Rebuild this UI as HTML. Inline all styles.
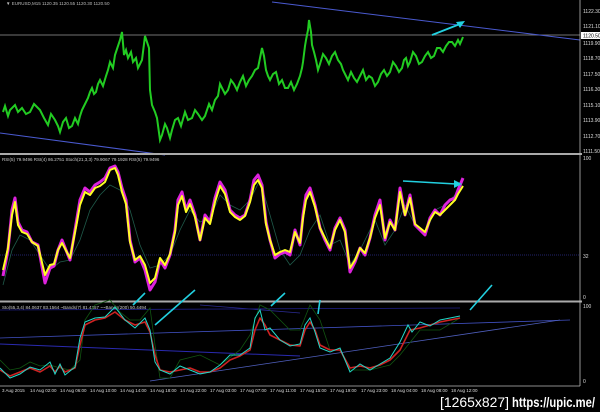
<!DOCTYPE html>
<html><head><style>
html,body{margin:0;padding:0;background:#000;width:600px;height:412px;overflow:hidden}
svg{display:block}
text{font-family:"Liberation Sans",sans-serif;fill:#ddd}
.ax{font-size:5px;fill:#ccc}
</style></head><body>
<svg width="600" height="412" viewBox="0 0 600 412">
<rect width="600" height="412" fill="#000"/>
<text x="6" y="5" style="font-size:4.5px;fill:#bbb">▼ EURUSD,M15 1120.35 1120.55 1120.30 1120.50</text>
<line x1="0" y1="35" x2="580" y2="35" stroke="#999" stroke-width="0.8"/>
<line x1="272" y1="2" x2="580" y2="40" stroke="#4a5ad0" stroke-width="1"/>
<line x1="0" y1="133" x2="165" y2="155" stroke="#4a5ad0" stroke-width="1"/>
<polyline fill="none" stroke="#22cc22" stroke-width="2" stroke-linejoin="miter" points="3,112 5,106 8,116 10,110 15,105 18,112 22,108 26,114 30,112 34,104 40,110 44,118 48,125 51,114 55,120 58,126 60,132 63,122 66,118 69,128 72,126 75,118 78,124 80,116 82,110 85,104 88,98 90,92 92,88 94,94 96,92 98,84 100,80 103,86 106,76 108,70 110,62 113,68 115,55 118,46 120,40 122,32 124,55 126,50 128,58 131,52 133,62 136,58 138,68 140,64 142,60 144,44 145,36 147,42 149,48 150,90 152,105 155,112 157,118 160,140 162,135 165,124 167,128 170,138 172,130 175,120 178,118 181,126 185,112 188,120 192,118 195,110 198,114 202,120 205,116 209,104 212,110 215,100 218,96 220,84 222,88 225,94 228,90 231,80 234,84 237,90 240,82 243,76 246,86 249,80 252,76 255,70 258,68 260,58 262,48 264,56 266,70 268,76 270,80 273,74 276,72 279,84 282,80 285,88 288,88 291,82 294,90 297,84 300,76 302,68 303,62 305,46 306,40 308,30 309,20 311,32 312,45 314,52 316,60 318,70 320,64 323,54 326,58 329,64 332,56 335,52 338,60 341,64 343,70 346,76 348,80 351,72 354,78 357,82 360,76 363,70 366,80 369,76 372,78 375,86 378,82 381,74 384,70 387,76 390,72 393,62 396,66 399,72 402,68 404,60 406,58 408,66 410,62 413,52 416,56 419,64 422,62 425,56 428,52 431,58 434,56 437,48 440,48 443,52 446,46 449,42 452,42 455,46 458,40 460,44 463,37"/>
<line x1="432" y1="35" x2="460" y2="24" stroke="#22d0e0" stroke-width="1.8"/>
<polygon points="465,21 456,22 460,28" fill="#22d0e0"/>
<line x1="0" y1="154" x2="582" y2="154" stroke="#aaa" stroke-width="2"/>
<line x1="0" y1="301.5" x2="582" y2="301.5" stroke="#aaa" stroke-width="2"/>
<line x1="580" y1="0" x2="580" y2="386" stroke="#bbb" stroke-width="0.8"/>
<line x1="0" y1="386" x2="580" y2="386" stroke="#bbb" stroke-width="0.8"/>
<g class="ax">
<text x="583" y="13">1122.30</text><text x="583" y="28">1121.10</text>
<rect x="581" y="32" width="19" height="7" fill="#fff"/><text x="583" y="37.5" style="fill:#000">1120.50</text>
<text x="583" y="45">1119.90</text><text x="583" y="60">1118.70</text><text x="583" y="76">1117.50</text>
<text x="583" y="91">1116.30</text><text x="583" y="107">1115.10</text><text x="583" y="122">1113.90</text>
<text x="583" y="138">1112.70</text><text x="583" y="153">1111.50</text>
<text x="583" y="160">100</text><text x="583" y="258">32</text><text x="583" y="299">0</text>
<text x="583" y="308">100</text><text x="583" y="383">0</text>
</g>
<text x="2" y="161" style="font-size:4.5px;fill:#ccc">RSI(5) 79.9496  RSI(4) 86.2751  Stoch(21,3,3) 79.9067 79.1928  RSI(5) 79.9496</text>
<line x1="0" y1="255" x2="580" y2="255" stroke="#22226a" stroke-width="1" stroke-dasharray="1,1"/>
<polyline fill="none" stroke="#1f5a4a" stroke-width="0.8" points="3,285 12,250 20,235 30,240 40,255 50,270 60,262 70,260 80,240 90,210 100,195 110,185 120,190 130,210 140,245 150,268 160,265 170,255 180,230 190,210 200,222 210,218 220,195 230,205 240,210 250,200 260,180 270,215 280,250 290,265 300,255 310,230 320,215 330,245 340,240 350,265 360,250 375,220 385,245 395,230 405,205 415,225 425,235 435,210 445,205 455,195 462,185"/>
<polyline fill="none" stroke="#dd22dd" stroke-width="3" stroke-linejoin="round" points="3,276 8,250 12,210 15,198 18,222 22,230 27,232 32,242 38,245 45,283 50,268 54,266 58,250 62,240 70,260 77,218 80,200 85,188 90,192 95,185 100,182 105,178 110,168 115,166 118,172 122,188 126,200 130,240 135,262 140,258 145,270 150,290 155,282 160,260 165,268 170,255 175,230 178,200 182,192 186,210 190,200 195,215 200,240 205,215 210,222 215,198 220,182 225,190 230,210 235,215 240,218 245,215 250,200 254,180 258,175 262,185 266,222 270,240 275,258 280,254 285,252 290,255 295,230 300,245 303,215 306,195 310,188 315,205 320,228 325,240 330,250 335,228 340,218 345,230 350,272 355,262 360,248 365,255 370,238 375,215 380,200 385,240 390,220 395,230 400,188 405,215 410,195 415,225 420,230 425,235 430,218 435,210 440,215 445,205 450,200 455,198 458,190 463,178"/>
<polyline fill="none" stroke="#ffff22" stroke-width="2" stroke-linejoin="round" points="3,270 8,248 12,215 15,202 18,225 22,232 27,234 32,242 38,246 45,275 50,265 54,264 58,250 62,243 70,258 77,222 80,205 85,192 90,195 95,188 100,186 105,182 110,170 115,168 118,175 122,192 126,204 130,242 135,260 140,256 145,265 150,283 155,278 160,258 165,265 170,254 175,232 178,205 182,196 186,212 190,204 195,217 200,240 205,218 210,224 215,202 220,186 225,194 230,212 235,217 240,220 245,216 250,202 254,185 258,180 262,188 266,224 270,240 275,255 280,252 285,250 290,252 295,232 300,243 303,218 306,200 310,192 315,207 320,228 325,238 330,248 335,230 340,220 345,232 350,268 355,260 360,248 365,253 370,238 375,218 380,205 385,238 390,222 395,230 400,192 405,215 410,198 415,224 420,228 425,232 430,220 435,212 440,215 445,210 450,205 455,200 458,194 463,186"/>
<line x1="403" y1="181" x2="456" y2="184" stroke="#22d0e0" stroke-width="1.6"/>
<polygon points="462,184 454,180 454,188" fill="#22d0e0"/>
<text x="2" y="309" style="font-size:4.5px;fill:#ccc">Sto(55,3,4) 84.0637 83.1564  ~Bands(7) 81.4357  ~~Bands(200) 50.4494</text>
<line x1="0" y1="338" x2="570" y2="320" stroke="#4050c0" stroke-width="0.8"/>
<line x1="0" y1="344" x2="300" y2="356" stroke="#2a2ab0" stroke-width="1"/>
<line x1="150" y1="381" x2="560" y2="320" stroke="#5060c0" stroke-width="0.8"/>
<line x1="200" y1="305" x2="300" y2="313" stroke="#2a2a90" stroke-width="0.8"/>
<line x1="0" y1="310" x2="460" y2="308" stroke="#20208a" stroke-width="0.8"/>
<polyline fill="none" stroke="#115511" stroke-width="0.8" points="0,360 10,370 20,368 30,362 40,366 50,365 60,368 70,370 80,360 85,320 95,305 110,300 120,312 130,320 140,320 150,308 155,345 160,378 170,378 180,360 200,355 220,365 240,350 250,335 260,305 270,310 280,320 290,330 300,330 310,305 320,320 330,350 340,350 350,370 370,370 390,365 400,355 420,330 440,330 460,318"/>
<polyline fill="none" stroke="#cc2222" stroke-width="1.6" stroke-linejoin="round" points="0,370 10,376 20,372 30,368 40,372 50,366 55,372 60,366 65,372 75,368 80,345 85,325 95,320 105,318 115,312 125,320 135,325 145,322 150,332 155,355 160,370 170,372 180,370 190,368 200,372 210,372 220,368 230,360 240,356 250,350 255,330 260,318 265,325 270,335 280,340 290,345 300,346 305,330 310,322 315,330 320,345 330,350 340,350 350,368 360,366 370,368 380,365 390,360 400,350 410,330 420,328 430,325 440,322 450,320 460,318"/>
<polyline fill="none" stroke="#22d8c8" stroke-width="1" points="0,368 10,378 20,374 30,367 40,370 50,362 55,374 60,364 65,375 75,367 80,338 85,322 95,318 105,317 115,307 125,320 135,328 145,318 150,330 155,362 160,370 170,374 180,366 190,370 200,374 210,372 220,365 230,355 240,355 250,348 255,318 260,310 265,330 270,328 280,340 290,346 300,344 305,325 310,318 315,332 320,348 330,352 340,348 350,372 360,364 370,370 380,364 390,358 400,342 408,325 412,332 420,322 430,326 440,320 450,318 460,316"/>
<g stroke="#22d0e0" stroke-width="1.6">
<line x1="145" y1="293" x2="133" y2="305"/><line x1="195" y1="290" x2="155" y2="325"/>
<line x1="285" y1="293" x2="271" y2="306"/><line x1="320" y1="300" x2="318" y2="314"/>
<line x1="492" y1="285" x2="470" y2="310"/>
</g>
<g style="font-size:4.5px;fill:#ccc">
<text x="2" y="392">3 Aug 2015</text><text x="30" y="392">14 Aug 02:00</text><text x="60" y="392">14 Aug 06:00</text>
<text x="90" y="392">14 Aug 10:00</text><text x="120" y="392">14 Aug 14:00</text><text x="150" y="392">14 Aug 18:00</text>
<text x="180" y="392">14 Aug 22:00</text><text x="210" y="392">17 Aug 03:00</text><text x="240" y="392">17 Aug 07:00</text>
<text x="270" y="392">17 Aug 11:00</text><text x="300" y="392">17 Aug 15:00</text><text x="330" y="392">17 Aug 19:00</text>
<text x="361" y="392">17 Aug 23:00</text><text x="391" y="392">18 Aug 04:00</text><text x="421" y="392">18 Aug 08:00</text>
<text x="451" y="392">18 Aug 12:00</text>
</g>
<text x="440" y="407" textLength="69" lengthAdjust="spacingAndGlyphs" style="font-size:14px;fill:#fff">[1265x827]</text>
<text x="512" y="407" textLength="83" lengthAdjust="spacingAndGlyphs" style="font-size:14px;fill:#fff;font-weight:bold">https://upic.me/</text>
</svg>
</body></html>
